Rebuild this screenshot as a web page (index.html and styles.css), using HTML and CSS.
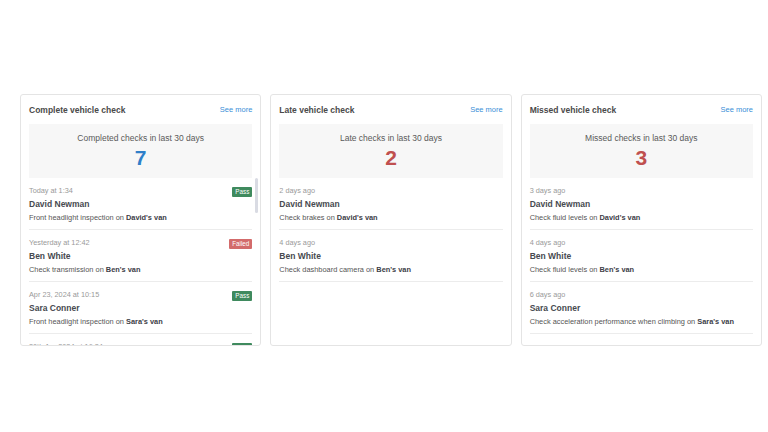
FILE: index.html
```html
<!DOCTYPE html>
<html>
<head>
<meta charset="utf-8">
<link rel="stylesheet" href="styles.css">
</head>
<body>
<div class="page">
  <section class="card">
    <div class="card-head"><span class="title">Complete vehicle check</span><a class="more">See more</a></div>
    <div class="stats"><div class="stats-label">Completed checks in last 30 days</div><div class="stats-num blue">7</div></div>
    <div class="list-wrap">
      <ul class="list">
        <li class="item"><div class="row"><span class="date">Today at 1:34</span><span class="badge pass">Pass</span></div><div class="name">David Newman</div><div class="desc">Front headlight inspection on <b>David's van</b></div></li>
        <li class="item"><div class="row"><span class="date">Yesterday at 12:42</span><span class="badge fail">Failed</span></div><div class="name">Ben White</div><div class="desc">Check transmission on <b>Ben's van</b></div></li>
        <li class="item"><div class="row"><span class="date">Apr 23, 2024 at 10:15</span><span class="badge pass">Pass</span></div><div class="name">Sara Conner</div><div class="desc">Front headlight inspection on <b>Sara's van</b></div></li>
        <li class="item"><div class="row"><span class="date">20th Apr 2024 at 16:34</span><span class="badge pass">Pass</span></div><div class="name">David Newman</div><div class="desc">Check tyre pressure on <b>David's van</b></div></li>
      </ul>
      <div class="thumb"></div>
    </div>
  </section>
  <section class="card">
    <div class="card-head"><span class="title">Late vehicle check</span><a class="more">See more</a></div>
    <div class="stats"><div class="stats-label">Late checks in last 30 days</div><div class="stats-num red">2</div></div>
    <div class="list-wrap">
      <ul class="list">
        <li class="item"><div class="row"><span class="date">2 days ago</span></div><div class="name">David Newman</div><div class="desc">Check brakes on <b>David's van</b></div></li>
        <li class="item"><div class="row"><span class="date">4 days ago</span></div><div class="name">Ben White</div><div class="desc">Check dashboard camera on <b>Ben's van</b></div></li>
      </ul>
    </div>
  </section>
  <section class="card">
    <div class="card-head"><span class="title">Missed vehicle check</span><a class="more">See more</a></div>
    <div class="stats"><div class="stats-label">Missed checks in last 30 days</div><div class="stats-num red">3</div></div>
    <div class="list-wrap">
      <ul class="list">
        <li class="item"><div class="row"><span class="date">3 days ago</span></div><div class="name">David Newman</div><div class="desc">Check fluid levels on <b>David's van</b></div></li>
        <li class="item"><div class="row"><span class="date">4 days ago</span></div><div class="name">Ben White</div><div class="desc">Check fluid levels on <b>Ben's van</b></div></li>
        <li class="item"><div class="row"><span class="date">6 days ago</span></div><div class="name">Sara Conner</div><div class="desc">Check acceleration performance when climbing on <b>Sara's van</b></div></li>
      </ul>
    </div>
  </section>
</div>
</body>
</html>
```
FILE: styles.css
```css
html, body {
  margin: 0;
  padding: 0;
  background: #ffffff;
  font-family: "Liberation Sans", Arial, sans-serif;
}
.page {
  display: grid;
  grid-template-columns: repeat(3, 1fr);
  gap: 9px;
  padding: 94px 6px 0 20px;
}
.card {
  height: 252px;
  box-sizing: border-box;
  border: 1px solid #e4e4e4;
  border-radius: 3px;
  background: #fff;
  display: flex;
  flex-direction: column;
  overflow: hidden;
}
.card-head {
  display: flex;
  justify-content: space-between;
  align-items: center;
  padding: 9px 8px 0 8px;
  height: 12px;
  margin-bottom: 8px;
  box-sizing: content-box;
}
.title {
  font-size: 8.5px;
  font-weight: bold;
  color: #4a4a4a;
  line-height: 12px;
}
.more {
  font-size: 7.5px;
  color: #3a8fd8;
  line-height: 12px;
}
.stats {
  margin: 0 8px;
  background: #f7f7f7;
  height: 54px;
  box-sizing: border-box;
  padding-top: 9px;
  text-align: center;
}
.stats-label {
  font-size: 8.5px;
  line-height: 10px;
  color: #5a5a5a;
  margin-bottom: 4px;
}
.stats-num {
  font-size: 21px;
  font-weight: bold;
  line-height: 22px;
}
.blue { color: #2f7fc9; }
.red { color: #c0504f; }
.list-wrap {
  position: relative;
  flex: 1;
  min-height: 0;
  overflow: hidden;
}
.list {
  list-style: none;
  margin: 0 8px;
  padding: 0;
}
.item {
  padding: 8px 0 6px;
  border-bottom: 1px solid #ececec;
}
.row {
  display: flex;
  justify-content: space-between;
  align-items: center;
  height: 10px;
}
.date {
  font-size: 7.3px;
  color: #9a9a9a;
  line-height: 10px;
}
.badge {
  font-size: 6.3px;
  color: #fff;
  line-height: 10px;
  height: 10px;
  padding: 0 3px;
  border-radius: 1px;
  margin-top: 1px;
}
.pass { background: #3f8a5e; }
.fail { background: #d36b6b; }
.name {
  font-size: 8.5px;
  font-weight: bold;
  color: #474a50;
  line-height: 12px;
  margin-top: 2px;
}
.desc {
  font-size: 7.4px;
  color: #555;
  line-height: 10px;
  margin-top: 3px;
}
.desc b { color: #3d4047; }
.thumb {
  position: absolute;
  top: 0;
  right: 2px;
  width: 3px;
  height: 35px;
  border-radius: 2px;
  background: #d9dbe3;
}
```
